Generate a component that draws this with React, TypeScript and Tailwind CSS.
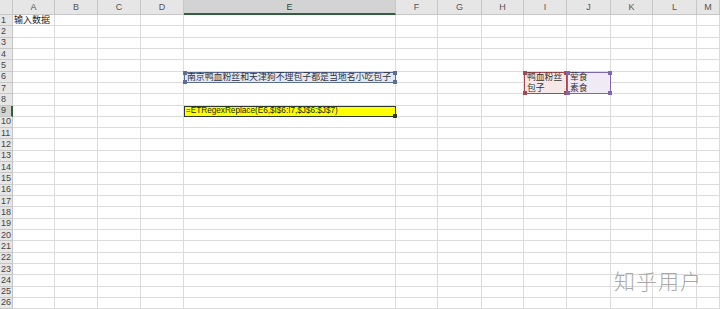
import React from "react";

const cols = ["A", "B", "C", "D", "E", "F", "G", "H", "I", "J", "K", "L", "M"];
const rows = Array.from({ length: 26 }, (_, i) => i + 1);

const font = { fontFamily: '"Liberation Sans", "Noto Sans CJK SC", sans-serif' };

function Handle({ pos, color }: { pos: string; color: string }) {
  return <span className={`absolute h-[4px] w-[4px] ${pos} ${color}`} />;
}

export default function App() {
  return (
    <div className="h-[309px] w-[720px] overflow-hidden bg-white text-[9px] leading-none text-[#222]" style={font}>
      <div className="grid grid-cols-[13px_42px_43px_43px_43px_212px_42px_44px_42px_43px_44px_42px_44px_1fr] grid-rows-[15px_repeat(26,11.32px)]">
        {/* corner */}
        <div className="col-start-1 row-start-1 border-b border-r border-[#c6c6c6] bg-[#e6e6e6]" />
        {cols.map((c, i) => (
          <div
            key={c}
            style={{ gridColumnStart: i + 2, gridRowStart: 1 }}
            className={
              c === "E"
                ? "flex items-end justify-center border-r border-b-2 border-r-[#c6c6c6] border-b-[#2f5f3f] bg-[#d3d3d3] pb-[1px] text-[#2c4a36]"
                : "flex items-end justify-center border-r border-b border-[#c6c6c6] bg-[#e6e6e6] pb-[2px] text-[#555]"
            }
          >
            {c}
          </div>
        ))}
        {rows.map((r) => (
          <React.Fragment key={r}>
            <div
              style={{ gridColumnStart: 1, gridRowStart: r + 1 }}
              className={
                r === 9
                  ? "flex items-center justify-start border-b border-r-2 border-b-[#c6c6c6] border-r-[#2f5f3f] bg-[#d3d3d3] pl-[1px] text-[#2c4a36]"
                  : "flex items-center justify-start border-b border-r border-[#c6c6c6] bg-[#e6e6e6] pl-[1px] text-[#444]"
              }
            >
              {r}
            </div>
            {cols.map((c, i) => (
              <div
                key={c}
                style={{ gridColumnStart: i + 2, gridRowStart: r + 1 }}
                className="border-b border-r border-[#dcdcdc]"
              />
            ))}
          </React.Fragment>
        ))}

        {/* A1 */}
        <div className="col-start-2 row-start-2 flex items-center pl-[1px] text-[9px]">输入数据</div>

        {/* E6 */}
        <div className="relative col-start-6 row-start-7 flex items-center border border-[#5d6e94] bg-[#e4e8f1] pl-[2px] text-[8.9px] text-[#2c3344]">
          南京鸭血粉丝和天津狗不理包子都是当地名小吃包子
          <Handle pos="-left-[2px] -top-[2px]" color="bg-[#5d6e94]" />
          <Handle pos="-right-[2px] -top-[2px]" color="bg-[#5d6e94]" />
          <Handle pos="-left-[2px] -bottom-[2px]" color="bg-[#5d6e94]" />
          <Handle pos="-right-[2px] -bottom-[2px]" color="bg-[#5d6e94]" />
        </div>

        {/* E9 */}
        <div className="relative col-start-6 row-start-10 flex items-center border border-[#2b3a2b] bg-[#ffff00] pl-[1px] text-[8.2px] text-[#222]">
          =ETRegexReplace(E6,$I$6:I7,$J$6:$J$7)
          <span className="absolute -bottom-[2px] -right-[2px] h-[4px] w-[4px] bg-[#2b3a2b]" />
        </div>

        {/* I6:I7 */}
        <div className="relative col-start-10 row-start-7 row-span-2 flex flex-col justify-around border border-[#a54a52] bg-[#f7e8e8] pl-[2px] text-[8.8px] text-[#333]">
          <span>鸭血粉丝</span>
          <span>包子</span>
          <Handle pos="-left-[2px] -top-[2px]" color="bg-[#a54a52]" />
          <Handle pos="-right-[2px] -top-[2px]" color="bg-[#a54a52]" />
          <Handle pos="-left-[2px] -bottom-[2px]" color="bg-[#a54a52]" />
          <Handle pos="-right-[2px] -bottom-[2px]" color="bg-[#a54a52]" />
        </div>

        {/* J6:J7 */}
        <div className="relative col-start-11 row-start-7 row-span-2 flex flex-col justify-around border border-[#7c68aa] bg-[#efeaf6] pl-[2px] text-[8.8px] text-[#333]">
          <span>荤食</span>
          <span>素食</span>
          <Handle pos="-left-[2px] -top-[2px]" color="bg-[#7c68aa]" />
          <Handle pos="-right-[2px] -top-[2px]" color="bg-[#7c68aa]" />
          <Handle pos="-left-[2px] -bottom-[2px]" color="bg-[#7c68aa]" />
          <Handle pos="-right-[2px] -bottom-[2px]" color="bg-[#7c68aa]" />
        </div>

        {/* watermark */}
        <div
          className="col-start-10 col-span-5 row-start-24 row-span-3 flex items-center justify-end pr-[18px] text-[21px] font-light tracking-[1px] text-[#a8a8a8]"
          style={{ fontFamily: '"Noto Sans CJK SC", sans-serif' }}
        >
          知乎用户
        </div>
      </div>
    </div>
  );
}
